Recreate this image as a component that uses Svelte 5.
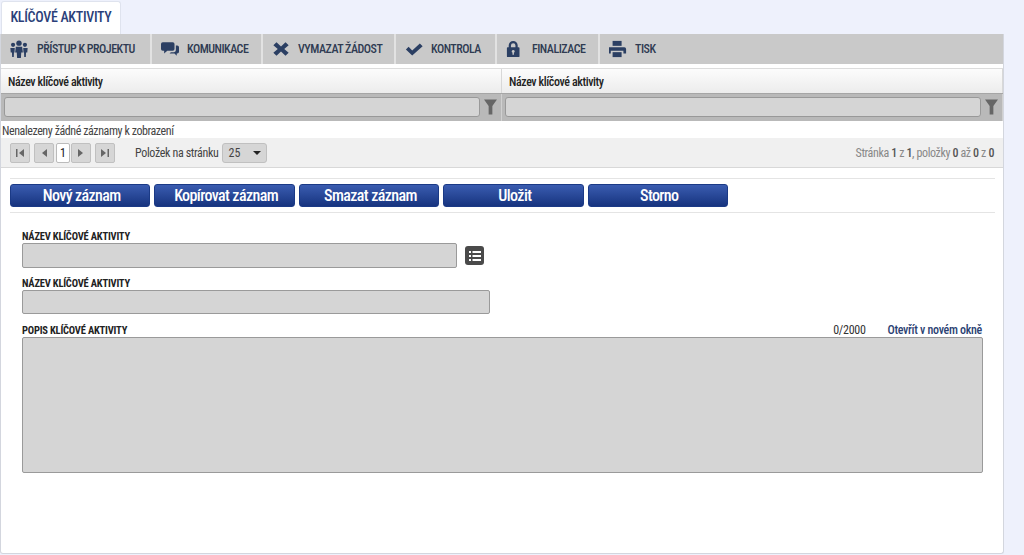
<script>
  const tools = [
    { label: 'PŘÍSTUP K PROJEKTU', icon: 'people', w: 151 },
    { label: 'KOMUNIKACE', icon: 'chat', w: 111 },
    { label: 'VYMAZAT ŽÁDOST', icon: 'cross', w: 133 },
    { label: 'KONTROLA', icon: 'check', w: 101 },
    { label: 'FINALIZACE', icon: 'lock', w: 103 },
    { label: 'TISK', icon: 'print', w: 80 }
  ];
  const actions = ['Nový záznam', 'Kopírovat záznam', 'Smazat záznam', 'Uložit', 'Storno'];
  const columns = ['Název klíčové aktivity', 'Název klíčové aktivity'];
</script>

<div class="page">
  <div class="tab">KLÍČOVÉ AKTIVITY</div>
  <div class="panel">
    <div class="toolbar">
      {#each tools as t}
        <div class="tool" style="width: {t.w}px">
          <svg class="ticon" viewBox="0 -1 20 20" width="18" height="18">
            {#if t.icon === 'people'}
              <g fill="#2b3f63">
                <circle cx="10" cy="2.500" r="3" /><path d="M6.500 6.500h7l.8 6.500h-1.800l-.4 6H7.900l-.4-6H5.700z" />
                <circle cx="3.400" cy="4.400" r="2.300" /><path d="M.4 7.800h4.900l-.3 5.200h-.6l-.2 5H2.400l-.2-5H.8z" />
                <circle cx="16.600" cy="4.400" r="2.300" /><path d="M14.700 7.800h4.900l-.4 5.200h-1.400l-.2 5h-1.800l-.2-5H15z" />
              </g>
            {:else if t.icon === 'chat'}
              <g fill="#2b3f63">
                <path d="M2 1.500h11a2 2 0 0 1 2 2V9a2 2 0 0 1-2 2H7l-3.500 3v-3H2a2 2 0 0 1-2-2V3.500a2 2 0 0 1 2-2z" />
                <path d="M16.500 5H18a2 2 0 0 1 2 2v5a2 2 0 0 1-2 2h-.5v2.500L15 14H9.500l1.500-1.500h3.500a2 2 0 0 0 2-2z" />
              </g>
            {:else if t.icon === 'cross'}
              <path d="M5 1.500 10 6.300 15 1.500l3.500 3.400L13.600 9l4.900 4.200-3.500 3.400L10 11.800l-5 4.800-3.500-3.400L6.400 9 1.500 4.900z" fill="#2b3f63" />
            {:else if t.icon === 'check'}
              <path d="M1 9.500 4 6.600l4 4L16.500 3 19.600 6 8 16.200z" fill="#2b3f63" />
            {:else if t.icon === 'lock'}
              <path transform="translate(-2 0)" fill="#2b3f63" fill-rule="evenodd" d="M10 0a5 5 0 0 1 5 5v2h1a1 1 0 0 1 1 1v9a1 1 0 0 1-1 1H4a1 1 0 0 1-1-1V8a1 1 0 0 1 1-1h1V5a5 5 0 0 1 5-5zm0 2.500A2.500 2.500 0 0 0 7.500 5v2h5V5A2.500 2.500 0 0 0 10 2.500zM10 10a1.600 1.600 0 0 0-.8 3v2.300h1.600V13a1.600 1.600 0 0 0-.8-3z" />
            {:else}
              <g fill="#2b3f63" transform="translate(-1 0)">
                <path d="M5 0h10v5.500H5z" />
                <path d="M2 7h16a2 2 0 0 1 2 2v5h-3v-3H3v3H0V9a2 2 0 0 1 2-2z" />
                <path d="M5 12.500h10V18H5z" />
              </g>
            {/if}
          </svg>
          <span>{t.label}</span>
        </div>
      {/each}
    </div>

    <div class="grid-head">
      {#each columns as c}
        <div class="hcell">{c}</div>
      {/each}
    </div>
    <div class="grid-filter">
      {#each columns as c}
        <div class="fcell">
          <div class="finput"></div>
          <svg class="funnel" viewBox="0 0 14 16" width="13" height="16">
            <path d="M0 0h14L9 7v9H5V7z" fill="#666" />
          </svg>
        </div>
      {/each}
    </div>
    <div class="empty">Nenalezeny žádné záznamy k zobrazení</div>

    <div class="pager">
      <div class="pbtns">
        <span class="pbtn"><svg viewBox="0 0 10 10" width="10" height="10"><path d="M1 1h1.500v8H1zM9 1v8L4 5z" fill="#666" /></svg></span>
        <span class="pbtn second"><svg viewBox="0 0 10 10" width="10" height="10"><path d="M8 1v8L3 5z" fill="#666" /></svg></span>
        <span class="pcur">1</span>
        <span class="pbtn"><svg viewBox="0 0 10 10" width="10" height="10"><path d="M2 1v8l5-4z" fill="#666" /></svg></span>
        <span class="pbtn second"><svg viewBox="0 0 10 10" width="10" height="10"><path d="M1 1v8l5-4zM7.500 1H9v8H7.500z" fill="#666" /></svg></span>
      </div>
      <span class="plabel">Položek na stránku</span>
      <div class="psize"><span>25</span><i class="caret"></i></div>
      <div class="pinfo">Stránka <b>1</b> z <b>1</b>, položky <b>0</b> až <b>0</b> z <b>0</b></div>
    </div>

    <div class="form">
      <div class="actions">
        {#each actions as a}
          <button type="button">{a}</button>
        {/each}
      </div>

      <div class="fields">
        <div class="flabel">NÁZEV KLÍČOVÉ AKTIVITY</div>
        <div class="row">
          <div class="input first"></div>
          <span class="listbtn">
            <svg viewBox="0 0 12 10" width="12" height="10">
              <path d="M0 0h2v2H0zM3.500 0H12v2H3.500zM0 4h2v2H0zM3.500 4H12v2H3.500zM0 8h2v2H0zM3.500 8H12v2H3.500z" fill="#fff" />
            </svg>
          </span>
        </div>
        <div class="flabel l2">NÁZEV KLÍČOVÉ AKTIVITY</div>
        <div class="input second"></div>
        <div class="lrow">
          <div class="flabel">POPIS KLÍČOVÉ AKTIVITY</div>
          <span class="count">0/2000</span>
          <span class="open">Otevřít v novém okně</span>
        </div>
        <div class="area"></div>
      </div>
    </div>
  </div>
</div>

<style>
  :global(body) {
    margin: 0;
    background: #eef1fc;
  }
  .page {
    width: 1024px;
    height: 555px;
    overflow: hidden;
    box-sizing: border-box;
    padding-top: 1px;
    font-family: Roboto, "Liberation Sans", sans-serif;
    font-stretch: condensed;
  }
  .tab {
    margin-left: 1px;
    width: 120px;
    height: 33px;
    box-sizing: border-box;
    background: #fff;
    border: 1px solid #dfe3ee;
    border-bottom: 0;
    border-radius: 3px 3px 0 0;
    color: #2b3f7a;
    font-size: 14px;
    font-weight: 500;
    line-height: 31px;
    text-align: center;
    white-space: nowrap;
    letter-spacing: -0.3px;
  }
  .panel {
    width: 1004px;
    height: 520px;
    box-sizing: border-box;
    background: #fff;
    border: 1px solid #d3d6de;
    border-top: 0;
    border-radius: 0 0 3px 3px;
  }
  .toolbar {
    display: flex;
    height: 30px;
    background: #c9c9c9;
  }
  .tool {
    display: flex;
    align-items: center;
    gap: 8px;
    box-sizing: border-box;
    padding-left: 9px;
    border-right: 2px solid #e2e2e2;
    color: #2f3b52;
    font-size: 12px;
    font-weight: 500;
    letter-spacing: -0.5px;
    white-space: nowrap;
  }
  .tool:first-child {
    gap: 9px;
  }
  .tool:last-child {
    border-right: 0;
  }
  .ticon {
    flex: none;
  }
  .grid-head {
    display: flex;
    margin-top: 4px;
    height: 25px;
    background: linear-gradient(#fcfcfc, #ececec);
    border-top: 1px solid #dcdcdc;
    box-sizing: border-box;
  }
  .hcell {
    width: 501px;
    box-sizing: border-box;
    padding-left: 7px;
    line-height: 27px;
    font-size: 12px;
    font-weight: 500;
    color: #222;
    letter-spacing: -0.4px;
    border-right: 1px solid #d8d8d8;
  }
  .grid-filter {
    display: flex;
    height: 28px;
    background: #b9b9b9;
    border-top: 1px solid #a6a6a6;
    box-sizing: border-box;
  }
  .fcell {
    width: 501px;
    box-sizing: border-box;
    display: flex;
    align-items: center;
    gap: 4px;
    padding: 0 4px 1px 3px;
    border-right: 1px solid #d0d0d0;
  }
  .finput {
    flex: 1;
    height: 20px;
    box-sizing: border-box;
    background: #d5d5d5;
    border: 1px solid #999;
    border-radius: 3px;
  }
  .funnel {
    flex: none;
  }
  .empty {
    height: 17px;
    padding-left: 1px;
    font-size: 12px;
    line-height: 20px;
    color: #444;
    letter-spacing: -0.43px;
  }
  .pager {
    display: flex;
    align-items: center;
    height: 30px;
    box-sizing: border-box;
    padding: 0 9px;
    background: #f0f0f0;
    border-bottom: 1px solid #d8d8d8;
    font-size: 12px;
    color: #444;
  }
  .pbtns {
    display: flex;
    align-items: center;
  }
  .pbtn {
    display: flex;
    align-items: center;
    justify-content: center;
    width: 20px;
    height: 20px;
    box-sizing: border-box;
    background: #d6d6d6;
    border: 1px solid #c0c0c0;
    border-radius: 2px;
  }
  .pbtn.second {
    margin-left: 4px;
  }
  .pcur {
    width: 14px;
    height: 20px;
    box-sizing: border-box;
    background: #fff;
    border: 1px solid #bbb;
    border-radius: 2px;
    margin: 0 1px 0 2px;
    text-align: center;
    line-height: 19px;
    color: #222;
  }
  .plabel {
    margin-left: 20px;
    letter-spacing: -0.35px;
  }
  .psize {
    display: flex;
    align-items: center;
    justify-content: space-between;
    box-sizing: border-box;
    width: 45px;
    height: 20px;
    margin-left: 4px;
    padding: 0 5px;
    background: #d6d6d6;
    border: 1px solid #c0c0c0;
    border-radius: 3px;
  }
  .caret {
    border-left: 4px solid transparent;
    border-right: 4px solid transparent;
    border-top: 4px solid #222;
  }
  .pinfo {
    margin-left: auto;
    color: #888;
    letter-spacing: -0.38px;
  }
  .pinfo b {
    color: #555;
    font-weight: 500;
  }
  .form {
    margin: 10px 8px 0 9px;
  }
  .actions {
    display: flex;
    gap: 4px;
    height: 23px;
    padding: 5px 0 5px;
    border-top: 1px solid #e4e4e4;
    border-bottom: 1px solid #e4e4e4;
  }
  .actions button {
    width: 140.4px;
    height: 23px;
    padding: 0 0 0 3px;
    border: 1px solid #1b3a86;
    border-radius: 3px;
    background: linear-gradient(#3a5cb0, #17347f);
    color: #fff;
    font-family: inherit;
    font-stretch: condensed;
    font-size: 16px;
    font-weight: 500;
    letter-spacing: -0.6px;
  }
  .fields {
    padding: 17px 12px 0 12px;
  }
  .flabel {
    font-size: 10.5px;
    font-weight: 700;
    line-height: 13px;
    color: #222;
    letter-spacing: -0.2px;
  }
  .flabel.l2 {
    margin-top: 9px;
  }
  .row {
    display: flex;
    align-items: center;
    gap: 8px;
  }
  .input {
    box-sizing: border-box;
    background: #d5d5d5;
    border: 1px solid #9a9a9a;
    border-radius: 2px;
  }
  .input.first {
    width: 435px;
    height: 25px;
  }
  .input.second {
    width: 468px;
    height: 24px;
  }
  .listbtn {
    display: flex;
    align-items: center;
    justify-content: center;
    width: 19px;
    height: 19px;
    background: #4a4a4a;
    border-radius: 3px;
  }
  .lrow {
    display: flex;
    align-items: baseline;
    margin-top: 9px;
    height: 14px;
  }
  .lrow .flabel {
    flex: 1;
  }
  .count {
    font-size: 12px;
    color: #333;
    letter-spacing: -0.3px;
  }
  .open {
    margin-left: 22px;
    margin-right: 1px;
    font-size: 12px;
    font-weight: 500;
    color: #2b3f73;
    letter-spacing: -0.3px;
  }
  .area {
    height: 136px;
    box-sizing: border-box;
    background: #d5d5d5;
    border: 1px solid #9a9a9a;
    border-radius: 2px;
  }
</style>
